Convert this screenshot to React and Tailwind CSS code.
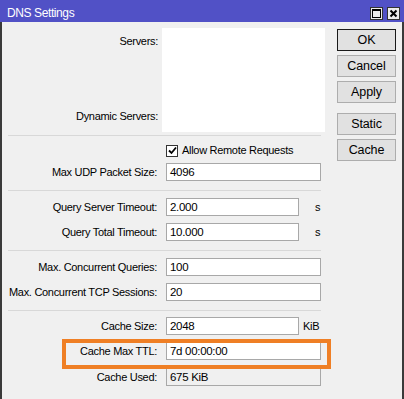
import React from "react";

const font = { fontFamily: '"Liberation Sans", Arial, sans-serif' };

function Label({ children, w = "w-[164px]", pr = "pr-[9px]" }) {
  return (
    <div className={`${w} ${pr} shrink-0 text-right text-[11px] tracking-[-0.3px] text-black`}>
      {children}
    </div>
  );
}

function Input({ value, w = "w-[155px]", ro = false }) {
  return (
    <div
      className={`${w} h-[18px] shrink-0 border border-[#a8a8a8] ${ro ? "bg-[#f0f0f0]" : "bg-white"} pl-[3px] text-[11.5px] leading-[16px] tracking-[-0.3px] text-black`}
    >
      {value}
    </div>
  );
}

function Sep({ mt }) {
  return <div className={`${mt} ml-[6px] h-px w-[313px] bg-[#d8d8d8]`} />;
}

function Btn({ children, mt, def = false }) {
  return (
    <div
      className={`${mt} flex h-[22px] w-[59px] items-center justify-center border ${def ? "border-[#1a1a1a]" : "border-[#adadad]"} bg-[#e1e1e1] text-[12.5px] tracking-[-0.1px] text-black`}
    >
      {children}
    </div>
  );
}

export default function App() {
  return (
    <div style={font} className="flex h-[399px] w-[404px] flex-col overflow-hidden bg-[#f0f0f0]">
      {/* title bar */}
      <div className="flex h-[22px] shrink-0 items-center bg-[#5151c6] pl-[7px] pr-[4px]">
        <div className="flex-1 pt-[3px] text-[12px] tracking-[-0.4px] text-white">DNS Settings</div>
        <div className="flex gap-[4px] pt-[4px]">
          <div className="flex h-[13px] w-[13px] items-center justify-center border border-[#333] bg-[#ececec]">
            <div className="h-[9px] w-[9px] border border-t-2 border-black" />
          </div>
          <div className="flex h-[13px] w-[13px] items-center justify-center border border-[#333] bg-[#ececec]">
            <svg width="9" height="9" viewBox="0 0 9 9">
              <path d="M1.5 1.5 L7.5 7.5 M7.5 1.5 L1.5 7.5" stroke="#000" strokeWidth="2" />
            </svg>
          </div>
        </div>
      </div>

      {/* body */}
      <div className="flex flex-1 border-x-2 border-[#3a3a3a]">
        {/* form */}
        <div className="flex w-[329px] shrink-0 flex-col">
          {/* servers */}
          <div className="mt-[6px] flex h-[104px]">
            <div className="flex w-[160px] shrink-0 flex-col justify-between pr-[4px] pt-[5px] pb-[8px] text-right text-[11px] tracking-[-0.3px] text-black">
              <div>Servers:</div>
              <div>Dynamic Servers:</div>
            </div>
            <div className="w-[163px] bg-white" />
          </div>
          <Sep mt="mt-[3px]" />

          {/* checkbox */}
          <div className="mt-[9px] flex h-[11px] items-center pl-[164px]">
            <div className="flex h-[12px] w-[12px] items-center justify-center border border-[#333] bg-white">
              <svg width="9" height="9" viewBox="0 0 9 9">
                <path d="M1 4.5 L3.5 7 L8 1.5" fill="none" stroke="#000" strokeWidth="1.8" />
              </svg>
            </div>
            <div className="ml-[4px] text-[11px] tracking-[-0.3px] text-black">Allow Remote Requests</div>
          </div>

          <div className="mt-[7px] flex items-center">
            <Label>Max UDP Packet Size:</Label>
            <Input value="4096" />
          </div>
          <Sep mt="mt-[9px]" />

          <div className="mt-[7px] flex items-center">
            <Label>Query Server Timeout:</Label>
            <Input value="2.000" w="w-[133px]" />
            <div className="ml-[16px] text-[11px] text-black">s</div>
          </div>
          <div className="mt-[7px] flex items-center">
            <Label>Query Total Timeout:</Label>
            <Input value="10.000" w="w-[133px]" />
            <div className="ml-[16px] text-[11px] text-black">s</div>
          </div>
          <Sep mt="mt-[9px]" />

          <div className="mt-[7px] flex items-center">
            <Label>Max. Concurrent Queries:</Label>
            <Input value="100" />
          </div>
          <div className="mt-[7px] flex items-center">
            <Label>Max. Concurrent TCP Sessions:</Label>
            <Input value="20" />
          </div>
          <Sep mt="mt-[9px]" />

          <div className="mt-[6px] flex items-center">
            <Label>Cache Size:</Label>
            <Input value="2048" w="w-[133px]" />
            <div className="ml-[4px] text-[11px] tracking-[-0.3px] text-black">KiB</div>
          </div>
          <div className="relative mt-[7px] flex items-center">
            <Label>Cache Max TTL:</Label>
            <Input value="7d 00:00:00" />
            <div className="pointer-events-none absolute left-[60px] top-[-3px] h-[30px] w-[269px] border-4 border-[#ef7f25]" />
          </div>
          <div className="mt-[8px] flex items-center">
            <Label>Cache Used:</Label>
            <Input value="675 KiB" ro />
          </div>
        </div>

        {/* buttons */}
        <div className="ml-[6px] flex flex-col pt-[7px]">
          <Btn mt="" def>OK</Btn>
          <Btn mt="mt-[4px]">Cancel</Btn>
          <Btn mt="mt-[4px]">Apply</Btn>
          <Btn mt="mt-[10px]">Static</Btn>
          <Btn mt="mt-[4px]">Cache</Btn>
        </div>
      </div>
    </div>
  );
}
